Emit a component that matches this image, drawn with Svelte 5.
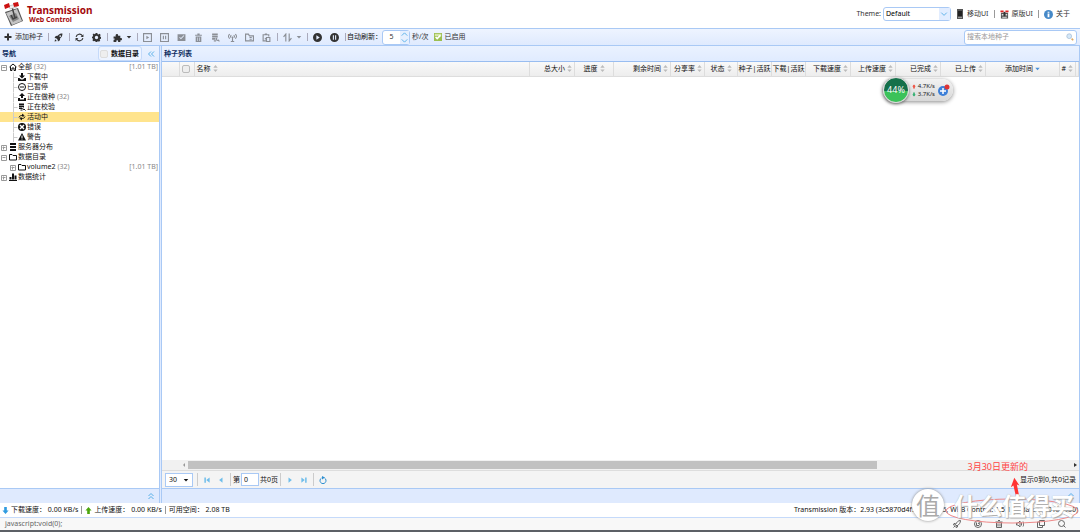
<script>
  let theme = $state('Default')
  let interval = $state('5')
  let search = $state('')
  let page = $state('0')
  let pageSize = $state('30')
  let showFolders = $state(false)
  let active = $state('活动中')

  // f = filled shape, s = stroked shape, on a 16x16 box
  const icons = {
    plus: { f: 'M6 1h4v5h5v4h-5v5H6v-5H1V6h5z' },
    rocket: { f: 'M15 1c-4 0-6 1-8.500 4L3 5.500 1 9l3 .5L6.500 12l.5 3 3.500-2 .5-3.500C14 7 15 5 15 1zM11 4a1.500 1.500 0 1 1 0 3 1.500 1.500 0 0 1 0-3zM1 15l1-4 3 3z' },
    rocketLine: { s: 'M15 1c-5 0-7 3-10 8l3 3c4-3 7-6 7-11zM5 7H2l-1 3h4M9 11v3l-3 1v-4M1 15l3-3' },
    refresh: { s: 'M2 7a6 6 0 0 1 11-2M14 9a6 6 0 0 1-11 2', f: 'M15 2v5h-5zM1 14V9h5z' },
    gear: { f: 'M6.500 0h3l.5 2 1.500.700L13.500 1.500l2 2.200-1.200 1.800.5 1.200L16 7v3l-1.700.5-.6 1.300 1 1.700-2.200 2-1.800-1-1.200.5L9 16H6.500L6 14.500 4.500 14l-1.800.8-2-2 1-1.900L1 9.500 0 9V6.500L1.500 6 2 4.500 1 3l2-2 2 1 1-.5zM8 5a3 3 0 1 0 0 6 3 3 0 0 0 0-6z' },
    puzzle: { f: 'M1 6h4c-2-5 5-6 4-1h4v4c4-1 4 5 0 4v3H9c1-4-4-4-3 0H1v-4c3 0 3-3 0-2z' },
    caret: { f: 'M2 5h12l-6 7z' },
    playBox: { s: 'M1 1h14v14H1z', f: 'M6 5l5 3-5 3z' },
    pauseBox: { s: 'M1 1h14v14H1zM6 5v6M10 5v6' },
    checkBox: { f: 'M1 2h14v12H1zM4 8l3 3 6-6-1-1-5 5-2-2z' },
    trash: { s: 'M3 5h10v10H3zM1 4h14M6 1h4M6 7v6M10 7v6' },
    bin: { f: 'M2 3h12v2H2zM6 1h4v2H6zM3 6h10v10H3zM6 8v6h1V8zM9 8v6h1V8z' },
    db: { f: 'M2 1h10v3H2zM2 5h10v3H2zM2 9h6v3H2zM5 13h4v2H5z', s: 'M11 9a2 2 0 1 0 1 4M12 12l3 3' },
    antenna: { s: 'M3 2c-3 3-3 5 0 8M13 2c3 3 3 5 0 8M6 4c-2 1-2 3 0 4M10 4c2 1 2 3 0 4M8 6v9M5 15h6' },
    folderList: { s: 'M1 2h5l2 3h7v9H1zM8 8h4M8 11h4' },
    paste: { s: 'M7 14H2V3h10v3M5 2h4M8 8h6v7H8zM5 11l3-2' },
    sort: { s: 'M5 15V2L1 7M11 1v13l4-5' },
    playCircle: { f: 'M8 0a8 8 0 1 0 0 16A8 8 0 0 0 8 0zM6 4l6 4-6 4z' },
    pauseCircle: { f: 'M8 0a8 8 0 1 0 0 16A8 8 0 0 0 8 0zM5 4h2v8H5zM9 4h2v8H9z' },
    home: { s: 'M1 8l7-6 7 6M3 7v8h3v-5h4v5h3V7' },
    download: { f: 'M6 0h4v5h4l-6 6-6-6h4zM0 10h3l3 3h4l3-3h3v6H0z' },
    minusCircle: { s: 'M8 1a7 7 0 1 0 0 14A7 7 0 0 0 8 1zM4 8h8' },
    upload: { f: 'M6 10h4V6h4L8 0 2 6h4zM0 10h4v3h8v-3h4v6H0z' },
    link: { s: 'M2 9c1-4 4-4 9-4M8 2l4 3-3 3M14 7c-1 4-4 4-9 4M8 14l-4-3 3-3' },
    error: { f: 'M8 0a8 8 0 1 0 0 16A8 8 0 0 0 8 0zM5 3l3 3 3-3 2 2-3 3 3 3-2 2-3-3-3 3-2-2 3-3-3-3z' },
    warning: { f: 'M8 0l8 15H0zM7 5v5h2V5zM7 11v2h2v-2z' },
    server: { f: 'M2 0h12v4H2zM2 6h12v4H2zM2 12h12v4H2z' },
    folder: { s: 'M1 3h5l2 2h7v9H1z' },
    chart: { f: 'M0 14h16v2H0zM1 8h4v5H1zM6 1h4v12H6zM11 5h4v8h-4z' },
    first: { f: 'M1 1h4v14H1zM15 1v14L6 8z' },
    prev: { f: 'M12 1v14L3 8z' },
    next: { f: 'M4 1v14l9-7z' },
    last: { f: 'M11 1h4v14h-4zM1 1v14l9-7z' },
    reload: { s: 'M5 4a6 6 0 1 0 6 0', f: 'M6 0l6 3-6 4z' },
    up: { f: 'M8 0l7 8h-4v8H5V8H1z' },
    down: { f: 'M8 16l7-8h-4V0H5v8H1z' },
    chevUp: { s: 'M3 8l5-5 5 5M3 14l5-5 5 5' },
    chevLeft: { s: 'M8 3L3 8l5 5M14 3L9 8l5 5' },
    search: { s: 'M7 1a6 6 0 1 0 0 12A6 6 0 0 0 7 1zM11 11l4 4' },
    gauge: { s: 'M8 1a7 7 0 1 0 0 14A7 7 0 0 0 8 1zM5 5v6h5a3 3 0 0 0 0-5M8 8l4-5' },
    speaker: { s: 'M1 6h3l4-4v12l-4-4H1zM11 5v6M14 3c2 3 2 7 0 10' },
    windows: { s: 'M5 1h10v10H5zM5 4H1v11h10v-4' }
  }

  const tools = [
    [{ icon: 'rocket', title: '全部开始' }],
    [{ icon: 'refresh', title: '刷新' }, { icon: 'gear', title: '设置' }],
    [{ icon: 'puzzle', title: '插件', menu: true }],
    [
      { icon: 'playBox', title: '开始', off: true },
      { icon: 'pauseBox', title: '暂停', off: true },
      { icon: 'checkBox', title: '校验', off: true },
      { icon: 'bin', title: '删除', off: true },
      { icon: 'db', title: '重新校验', off: true },
      { icon: 'antenna', title: '获取更多', off: true },
      { icon: 'folderList', title: '变更目录', off: true },
      { icon: 'paste', title: '复制', off: true }
    ],
    [{ icon: 'sort', title: '队列', menu: true, off: true }],
    [{ icon: 'playCircle', title: '全部启动' }, { icon: 'pauseCircle', title: '全部暂停' }]
  ]

  const tree = [
    { label: '全部', icon: 'home', count: 32, size: '1.01 TB', open: true },
    { label: '下载中', icon: 'download', leaf: true },
    { label: '已暂停', icon: 'minusCircle', leaf: true },
    { label: '正在做种', icon: 'upload', count: 32, leaf: true },
    { label: '正在校验', icon: 'db', leaf: true },
    { label: '活动中', icon: 'link', leaf: true },
    { label: '错误', icon: 'error', leaf: true },
    { label: '警告', icon: 'warning', leaf: true },
    { label: '服务器分布', icon: 'server' },
    { label: '数据目录', icon: 'folder', open: true },
    { label: 'volume2', icon: 'folder', count: 32, size: '1.01 TB', child: true },
    { label: '数据统计', icon: 'chart' }
  ]

  const columns = [
    { label: '总大小', cls: 'w45' },
    { label: '进度', cls: 'w39 center' },
    { label: '剩余时间', cls: 'w57' },
    { label: '分享率', cls: 'w34' },
    { label: '状态', cls: 'w33 center' },
    { label: '种子|活跃', cls: 'w34 center', plain: true },
    { label: '下载|活跃', cls: 'w34 center', plain: true },
    { label: '下载速度', cls: 'w45' },
    { label: '上传速度', cls: 'w45' },
    { label: '已完成', cls: 'w45' },
    { label: '已上传', cls: 'w45' },
    { label: '添加时间', cls: 'w74 center', sorted: true },
    { label: '#', cls: 'w16' }
  ]

  const browserTools = ['rocketLine', 'gauge', 'trash', 'speaker', 'windows', 'search']
</script>

{#snippet icon(name)}
  <svg class="icon" viewBox="0 0 16 16" aria-hidden="true">
    {#if icons[name].f}<path class="fill" d={icons[name].f} />{/if}
    {#if icons[name].s}<path class="line" d={icons[name].s} />{/if}
  </svg>
{/snippet}

{#snippet sorter()}
  <svg class="sorter" viewBox="0 0 5 8" aria-hidden="true"><path d="M0 3l2.500-3L5 3zM0 5h5L2.500 8z" /></svg>
{/snippet}

{#snippet classicLogo()}
  <svg class="classic" viewBox="0 0 20 20" aria-hidden="true">
    <path fill="#555" d="M2 6h16v13H2z" />
    <path fill="#ddd" d="M4 9h4v3H4zM12 9h4v3h-4zM5 15h10v2H5z" />
    <path fill="#333" d="M8 4h4v10H8z" />
    <path fill="#d22" d="M1 1h7v4H1zM12 1h7v4h-7z" />
  </svg>
{/snippet}

<div class="app">
  <header>
    <svg class="logo" viewBox="0 0 20 24" aria-hidden="true">
      <path fill="#555" d="M1 10l13-4 5 13-12 5z" />
      <path fill="#c4c4c4" d="M2 11l11-4 5 12-10 4z" />
      <path fill="#888" d="M5 14l7-3 3 6-6 3z" />
      <path fill="none" stroke="#444" stroke-width="1.500" d="M8 5l3 11M7 13l2 4 4-2" />
      <path fill="#eee" stroke="#999" stroke-width=".5" d="M5 4l7-2 1 3-7 2z" />
      <path fill="#c11" d="M0 3l5-2 1 4-5 2zM9 1l5-1 1 4-5 1z" />
    </svg>
    <h1>Transmission<small>Web Control</small></h1>
    <nav>
      <label for="theme">Theme:</label>
      <span class="combo">
        <select id="theme" bind:value={theme}>
          <option>Default</option>
        </select>
        <svg class="combo-arrow" viewBox="0 0 11 13" aria-hidden="true"><path d="M2 5l3 3 3-3" /></svg>
      </span>
      <a href="#mobile">
        <svg class="phone" viewBox="0 0 8 12" aria-hidden="true"><path fill="#555" d="M1 1h6v10H1z" /><path fill="#222" d="M2 3h4v5H2z" /><path fill="#999" d="M2 9h4v1H2z" /></svg>
        移动UI
      </a>
      <span class="bar"></span>
      <a href="#classic">{@render classicLogo()}原版UI</a>
      <span class="bar"></span>
      <a href="#about">
        <svg class="about" viewBox="0 0 10 10" aria-hidden="true"><circle cx="5" cy="5" r="5" fill="#4689c8" /><path fill="#fff" d="M4 2h2v1H4zM4 4h2v4H4z" /></svg>
        关于
      </a>
    </nav>
  </header>

  <div class="toolbar">
    <button class="add">{@render icon('plus')}添加种子</button>
    {#each tools as group}
      <span class="sep"></span>
      {#each group as tool}
        <button class="tool" class:menu={tool.menu} disabled={tool.off} title={tool.title} aria-label={tool.title}>
          {@render icon(tool.icon)}
          {#if tool.menu}<span class="caret">{@render icon('caret')}</span>{/if}
        </button>
      {/each}
    {/each}
    <span class="sep"></span>
    <label class="refresh-label" for="interval">自动刷新：</label>
    <span class="spinner">
      <input id="interval" bind:value={interval} />
      <svg viewBox="0 0 8 14" aria-hidden="true"><path d="M1 5l3-3 3 3M1 9l3 3 3-3" /></svg>
    </span>
    <span class="unit">秒/次</span>
    <button class="enabled">
      <svg viewBox="0 0 10 10" aria-hidden="true"><path fill="#9cbf50" d="M0 0h10v10H0z" /><path fill="#d5e6a8" d="M1 1h8v3H1z" /><path fill="none" stroke="#fff" stroke-width="2" d="M2 5l2 2 4-4" /></svg>
      已启用
    </button>
    <label class="search">
      <input bind:value={search} placeholder="搜索本地种子" aria-label="搜索本地种子" />
      <svg viewBox="0 0 10 10" aria-hidden="true"><circle cx="4" cy="4" r="3" fill="#d5e8f8" stroke="#a9c0d8" /><path stroke="#e0a860" stroke-width="2" d="M7 7l2 2" /></svg>
    </label>
  </div>

  <main>
    <aside>
      <div class="panel-title">
        <h2>导航</h2>
        <label class="folders"><input type="checkbox" bind:checked={showFolders} />数据目录</label>
        <button class="collapse" aria-label="收起">{@render icon('chevLeft')}</button>
      </div>
      <ul>
        {#each tree as node}
          <li class:inner={node.leaf || node.child} class:selected={node.label === active}>
            <button onclick={() => (active = node.label)}>
              <span class="toggle">
                {#if node.leaf}
                  <svg class="branch" viewBox="0 0 9 10" aria-hidden="true"><path d="M4 0v10M4 5h4" transform="translate(.5 .5)" /></svg>
                {:else}
                  <svg viewBox="0 0 7 7" aria-hidden="true"><path d="M1 1h5v5H1zM2 3h3{node.open ? '' : 'M3 2v3'}" transform="translate(.5 .5)" /></svg>
                {/if}
              </span>
              {@render icon(node.icon)}
              <span class="name">{node.label}</span>
              {#if node.count}<span class="muted">({node.count})</span>{/if}
              {#if node.size}<span class="muted size">[{node.size}]</span>{/if}
            </button>
          </li>
        {/each}
      </ul>
      <div class="panel-foot"><button class="collapse" aria-label="展开">{@render icon('chevUp')}</button></div>
    </aside>

    <section>
      <div class="panel-title"><h2>种子列表</h2></div>
      <div class="grid">
        <table>
          <thead>
            <tr>
              <th class="w17" aria-label="序号"></th>
              <th class="w15"><input type="checkbox" aria-label="全选" /></th>
              <th class="left">名称{@render sorter()}</th>
              {#each columns as col}
                <th class={col.cls}>
                  {col.label}{#if col.sorted}<svg class="sorter sorted" viewBox="0 0 5 8" aria-hidden="true"><path d="M0 3h5L2.500 6z" /></svg>{:else if !col.plain}{@render sorter()}{/if}
                </th>
              {/each}
              <th class="w3"></th>
            </tr>
          </thead>
        </table>
      </div>
      <div class="scroll">
        <svg viewBox="0 0 8 8" aria-hidden="true"><path fill="#999" d="M5 2v4L3 4z" /></svg>
        <div class="track"><div class="thumb"></div></div>
        <svg viewBox="0 0 8 8" aria-hidden="true"><path fill="#333" d="M3 2v4l3-2z" /></svg>
      </div>
      <div class="pager">
        <span class="page-size">
          <select bind:value={pageSize} aria-label="每页记录数">
            <option>30</option>
          </select>
          {@render icon('caret')}
        </span>
        <span class="line-sep"></span>
        <button aria-label="首页">{@render icon('first')}</button>
        <button aria-label="上一页">{@render icon('prev')}</button>
        <span class="line-sep"></span>
        <label for="page">第</label>
        <input id="page" bind:value={page} />
        <span>共0页</span>
        <span class="line-sep"></span>
        <button aria-label="下一页">{@render icon('next')}</button>
        <button aria-label="末页">{@render icon('last')}</button>
        <span class="line-sep"></span>
        <button class="reload" aria-label="刷新">{@render icon('reload')}</button>
        <span class="records">显示0到0,共0记录</span>
      </div>
      <div class="panel-foot"><button class="collapse" aria-label="展开">{@render icon('chevUp')}</button></div>
    </section>
  </main>

  <footer>
    <span class="speed down">{@render icon('down')}下载速度： 0.00 KB/s</span>
    <span class="bar"></span>
    <span class="speed up">{@render icon('up')}上传速度： 0.00 KB/s</span>
    <span class="bar"></span>
    <span>可用空间： 2.08 TB</span>
    <span class="version">Transmission 版本：2.93 (3c5870d4f5), RPC: 15, WEB Control: 1.5.1 update1 (20180330)</span>
  </footer>

  <div class="browser">
    <span>javascript:void(0);</span>
    <div class="browser-tools">
      {#each browserTools as name}{@render icon(name)}{/each}
    </div>
  </div>

  <div class="widget">
    <div class="ball">44%</div>
    <div class="rates">
      <span class="red">{@render icon('up')}<b>4.7K/s</b></span>
      <span class="green">{@render icon('down')}<b>3.7K/s</b></span>
    </div>
    <svg class="boost" viewBox="0 0 12 12" aria-hidden="true">
      <circle cx="5" cy="7" r="5" fill="#3c7fd8" />
      <path stroke="#fff" stroke-width="1.500" d="M2 7h6M5 4v6" />
      <circle cx="9" cy="3" r="2.500" fill="#d33" />
    </svg>
  </div>

  <div class="note">3月30日更新的</div>
  <svg class="arrow" viewBox="0 0 14 24" aria-hidden="true"><path fill="#f33" d="M5 0l6 9-3-1 3 15-4-1-3-13-3 2z" /></svg>
  <svg class="ring" viewBox="0 0 134 26" aria-hidden="true"><ellipse cx="67" cy="13" rx="66" ry="12" /></svg>
  <div class="stamp"><span class="seal">值</span><span class="words">什么值得买</span></div>
</div>

<style>
  :global(body) {
    background: #fff;
  }

  .app {
    position: relative;
    display: flex;
    flex-direction: column;
    box-sizing: border-box;
    height: 100vh;
    overflow: hidden;
    border-bottom: 2px solid #5c6066;
    font: 7px/10px "Noto Sans", "Noto Sans CJK SC", sans-serif;
    color: #111;
    white-space: nowrap;
  }

  button, input, select {
    box-sizing: border-box;
    margin: 0;
    padding: 0;
    border: 0;
    background: none;
    font: inherit;
    color: inherit;
    appearance: none;
    outline: none;
  }

  svg {
    flex: none;
    display: block;
  }

  .icon {
    width: 8px;
    height: 8px;
  }

  .fill {
    fill: currentColor;
    fill-rule: evenodd;
  }

  .line {
    fill: none;
    stroke: currentColor;
    stroke-width: 2;
  }

  h1, h2, ul {
    margin: 0;
    padding: 0;
  }

  header {
    display: flex;
    align-items: center;
    height: 28px;
    padding: 0 10px 0 4px;
  }

  .logo {
    width: 20px;
    height: 24px;
  }

  h1 {
    padding-left: 3px;
    font-size: 10px;
    line-height: 11px;
    color: #a3090c;
  }

  h1 small {
    display: block;
    padding-left: 2px;
    font-size: 7px;
    line-height: 8px;
  }

  nav {
    display: flex;
    align-items: center;
    margin-left: auto;
    color: #333;
  }

  nav a {
    display: flex;
    align-items: center;
    gap: 3px;
    color: inherit;
    text-decoration: none;
  }

  .bar {
    width: 1px;
    height: 8px;
    margin: 0 5px;
    background: #999;
  }

  footer .bar {
    margin: 0 3px;
  }

  .combo {
    display: flex;
    width: 68px;
    height: 14px;
    box-sizing: border-box;
    margin: 0 5px 0 2px;
    border: 1px solid #a9c9f5;
    border-radius: 3px;
    color: #000;
  }

  .combo select {
    flex: 1;
    padding-left: 2px;
  }

  .combo-arrow {
    width: 11px;
    background: #e2edff;
    fill: none;
    stroke: #58b0e8;
  }

  .phone {
    width: 8px;
    height: 12px;
  }

  .classic,
  .about {
    width: 9px;
    height: 9px;
  }

  .toolbar {
    display: flex;
    align-items: center;
    box-sizing: border-box;
    height: 18px;
    padding: 0 3px 0 4px;
    border: solid #a9c9f5;
    border-width: 1px 0;
    background: linear-gradient(#eef4ff, #dfeafe);
    color: #333;
  }

  .add {
    display: flex;
    align-items: center;
    gap: 3px;
    width: 42px;
  }

  .sep {
    width: 1px;
    height: 8px;
    margin: 0 1px 0 2px;
    background: #aab;
  }

  .tool {
    display: flex;
    align-items: center;
    justify-content: center;
    width: 17px;
    height: 14px;
  }

  .tool .icon {
    width: 9px;
    height: 9px;
  }

  .tool:disabled {
    color: #8b8f96;
  }

  .tool.menu {
    gap: 4px;
    width: 26px;
  }

  .caret .icon {
    width: 6px;
    height: 6px;
  }

  .refresh-label {
    width: 35px;
    color: #111;
  }

  .spinner {
    display: flex;
    align-items: center;
    box-sizing: border-box;
    width: 28px;
    height: 15px;
    border: 1px solid #a9c9f5;
    border-radius: 3px;
    background: #fff;
  }

  .spinner input {
    flex: 1;
    min-width: 0;
    text-align: center;
  }

  .spinner svg {
    width: 9px;
    height: 13px;
    background: #e6effe;
    fill: none;
    stroke: #58b0e8;
  }

  .unit {
    padding: 0 5px 0 2px;
  }

  .enabled {
    display: flex;
    align-items: center;
    gap: 3px;
  }

  .enabled svg {
    width: 8px;
    height: 8px;
  }

  .search {
    display: flex;
    align-items: center;
    box-sizing: border-box;
    width: 113px;
    height: 15px;
    margin-left: auto;
    padding: 0 2px;
    border: 1px solid #a9c9f5;
    border-radius: 3px;
    background: #fff;
  }

  .search input {
    flex: 1;
    min-width: 0;
  }

  .search input::placeholder {
    color: #999;
    opacity: 1;
  }

  .search svg {
    width: 8px;
    height: 8px;
  }

  main {
    flex: 1;
    display: grid;
    grid-template-columns: 160px 1fr;
    gap: 1px;
    min-height: 0;
    background: #dfeafe;
  }

  aside,
  section {
    display: flex;
    flex-direction: column;
    min-width: 0;
    background: #fff;
  }

  aside {
    border-right: 1px solid #a9c9f5;
  }

  section {
    border-left: 1px solid #a9c9f5;
    border-right: 1px solid #a9c9f5;
  }

  .panel-title {
    display: flex;
    align-items: center;
    box-sizing: border-box;
    height: 16px;
    padding: 0 4px 0 2px;
    border-bottom: 1px solid #99bdf0;
    background: linear-gradient(#eaf2ff, #e0ebff);
  }

  h2 {
    font-size: 7px;
    line-height: 10px;
    color: #0e2d5f;
  }

  .folders {
    display: flex;
    align-items: center;
    gap: 3px;
    height: 13px;
    margin-left: auto;
    padding: 0 2px 0 1px;
    border: 1px solid #c5dafa;
    border-radius: 3px;
    background: #eef4ff;
    font-weight: bold;
  }

  input[type='checkbox'] {
    width: 8px;
    height: 8px;
    border: 1px solid #bbb;
    border-radius: 2px;
    background: #eee;
  }

  .folders input[type='checkbox'] {
    border-color: #ddd;
  }

  .collapse {
    color: #58b0e8;
  }

  .panel-title .collapse {
    margin-left: 5px;
  }

  ul {
    flex: 1;
    list-style: none;
  }

  li button {
    display: flex;
    align-items: center;
    width: 100%;
    height: 10px;
    padding-right: 1px;
    text-align: left;
  }

  li.inner button {
    padding-left: 9px;
  }

  li.selected {
    background: #ffe48d;
  }

  .toggle {
    flex: none;
    width: 9px;
    height: 10px;
    display: flex;
    align-items: center;
  }

  .toggle svg {
    width: 7px;
    height: 7px;
    fill: none;
    stroke: #999;
    stroke-width: 1;
  }

  .toggle .branch {
    width: 9px;
    height: 10px;
    stroke: #ccc;
  }

  .name {
    padding-left: 1px;
  }

  .muted {
    padding-left: 2px;
    color: #888;
  }

  .size {
    margin-left: auto;
  }

  .panel-foot {
    display: flex;
    align-items: center;
    justify-content: flex-end;
    box-sizing: border-box;
    height: 15px;
    padding-right: 4px;
    border-top: 1px solid #a9c9f5;
    background: #dfeafe;
  }

  .grid {
    flex: 1;
    overflow: hidden;
  }

  table {
    width: 100%;
    table-layout: fixed;
    border-collapse: collapse;
    background: linear-gradient(#f9f9f9, #ededed);
  }

  th {
    box-sizing: border-box;
    height: 14px;
    padding: 0 2px 0 0;
    border-right: 1px solid #ddd;
    border-bottom: 1px solid #ddd;
    font-weight: normal;
    line-height: 10px;
    text-align: right;
  }

  th.left {
    padding-left: 2px;
    text-align: left;
  }

  th.center {
    padding: 0;
    text-align: center;
  }

  th input {
    display: block;
    margin: 0 auto;
  }

  .w3 { width: 3px; padding: 0; }
  .w15 { width: 15px; }
  .w16 { width: 16px; }
  .w17 { width: 17px; }
  .w33 { width: 33px; }
  .w34 { width: 34px; }
  .w39 { width: 39px; }
  .w45 { width: 45px; }
  .w57 { width: 57px; }
  .w74 { width: 74px; }

  .sorter {
    display: inline-block;
    width: 5px;
    height: 7px;
    margin-left: 2px;
    vertical-align: middle;
    fill: #bbb;
  }

  .sorted {
    fill: #4a90d9;
  }

  .scroll {
    display: flex;
    align-items: center;
    height: 10px;
    padding-left: 18px;
    background: #f1f1f1;
  }

  .scroll svg {
    width: 8px;
    height: 8px;
  }

  .track {
    flex: 1;
  }

  .thumb {
    width: 78%;
    height: 8px;
    background: #c1c1c1;
  }

  .pager {
    display: flex;
    align-items: center;
    box-sizing: border-box;
    height: 18px;
    padding: 0 3px;
    border-top: 1px solid #ddd;
    background: #f4f4f4;
  }

  .page-size {
    display: flex;
    align-items: center;
    box-sizing: border-box;
    width: 28px;
    height: 14px;
    margin-right: 2px;
    padding: 0 3px;
    border: 1px solid #a9c9f5;
    background: #fff;
  }

  .page-size select {
    flex: 1;
    min-width: 0;
  }

  .line-sep {
    width: 1px;
    height: 13px;
    margin: 0 2px;
    background: #ccc;
  }

  .pager button {
    display: flex;
    align-items: center;
    justify-content: center;
    width: 14px;
    height: 14px;
    color: #6fbdea;
  }

  .pager .icon {
    width: 6px;
    height: 6px;
  }

  .pager .reload {
    color: #2e8fd0;
  }

  .pager .reload .icon {
    width: 8px;
    height: 8px;
  }

  .pager input {
    width: 18px;
    height: 13px;
    margin: 0 1px;
    padding-left: 2px;
    border: 1px solid #a9c9f5;
    background: #fff;
  }

  .records {
    margin-left: auto;
  }

  footer {
    display: flex;
    align-items: center;
    height: 14px;
    padding: 0 2px;
    border-bottom: 1px solid #c5dafa;
    background: #fff;
  }

  .speed {
    display: flex;
    align-items: center;
    gap: 2px;
  }

  .speed .icon {
    width: 7px;
    height: 7px;
  }

  .down .icon { color: #2f9be0; }
  .up .icon { color: #4ca60c; }

  .version {
    margin-left: auto;
  }

  .browser {
    display: flex;
    align-items: center;
    justify-content: space-between;
    height: 12px;
    padding: 0 14px 0 5px;
    background: #f8f8f8;
    color: #666;
  }

  .browser-tools {
    display: flex;
    gap: 13px;
  }

  /* floating speed widget */
  .widget {
    position: absolute;
    top: 79px;
    right: 127px;
    display: flex;
    align-items: center;
    box-sizing: border-box;
    width: 70px;
    height: 22px;
    border-radius: 11px;
    background: linear-gradient(#f2f2f2, #d8d8d8);
    box-shadow: 0 1px 4px #888;
  }

  .ball {
    flex: none;
    box-sizing: border-box;
    width: 26px;
    height: 26px;
    border: 1px solid #ddd;
    border-radius: 50%;
    background: linear-gradient(#15704a 55%, #3cc25a 55%);
    box-shadow: 0 1px 3px #666;
    font-size: 9px;
    line-height: 24px;
    text-align: center;
    color: #fff;
  }

  .rates {
    flex: 1;
    font-size: 6px;
    line-height: 8px;
  }

  .rates span {
    display: flex;
    align-items: center;
    justify-content: space-between;
    padding: 0 3px;
  }

  .rates b {
    font-weight: normal;
    color: #222;
  }

  .rates .icon {
    width: 4px;
    height: 5px;
  }

  .red { color: #e43; }
  .green { color: #2a6; }

  .boost {
    width: 12px;
    height: 12px;
    margin-right: 3px;
  }

  /* annotations over the page */
  .note {
    position: absolute;
    right: 52px;
    bottom: 57px;
    font-size: 9px;
    line-height: 12px;
    color: #f44;
  }

  .arrow {
    position: absolute;
    right: 58px;
    bottom: 30px;
    width: 12px;
    height: 24px;
  }

  .stamp {
    position: absolute;
    right: 6px;
    bottom: 9px;
    display: flex;
    align-items: center;
    gap: 10px;
    font-family: "Noto Sans CJK SC", sans-serif;
    font-size: 24px;
    line-height: 32px;
    color: #fff;
    text-shadow: 0 0 1px #aaa, 1px 1px 1px #aaa;
  }

  .words {
    font-weight: bold;
  }

  .seal {
    width: 32px;
    height: 32px;
    border-radius: 50%;
    background: #fff;
    box-shadow: 0 0 3px #888;
    text-align: center;
    text-shadow: none;
    color: #aaa;
  }

  .ring {
    position: absolute;
    right: 1px;
    bottom: 6px;
    width: 134px;
    height: 26px;
    fill: none;
    stroke: #e88;
  }
</style>
